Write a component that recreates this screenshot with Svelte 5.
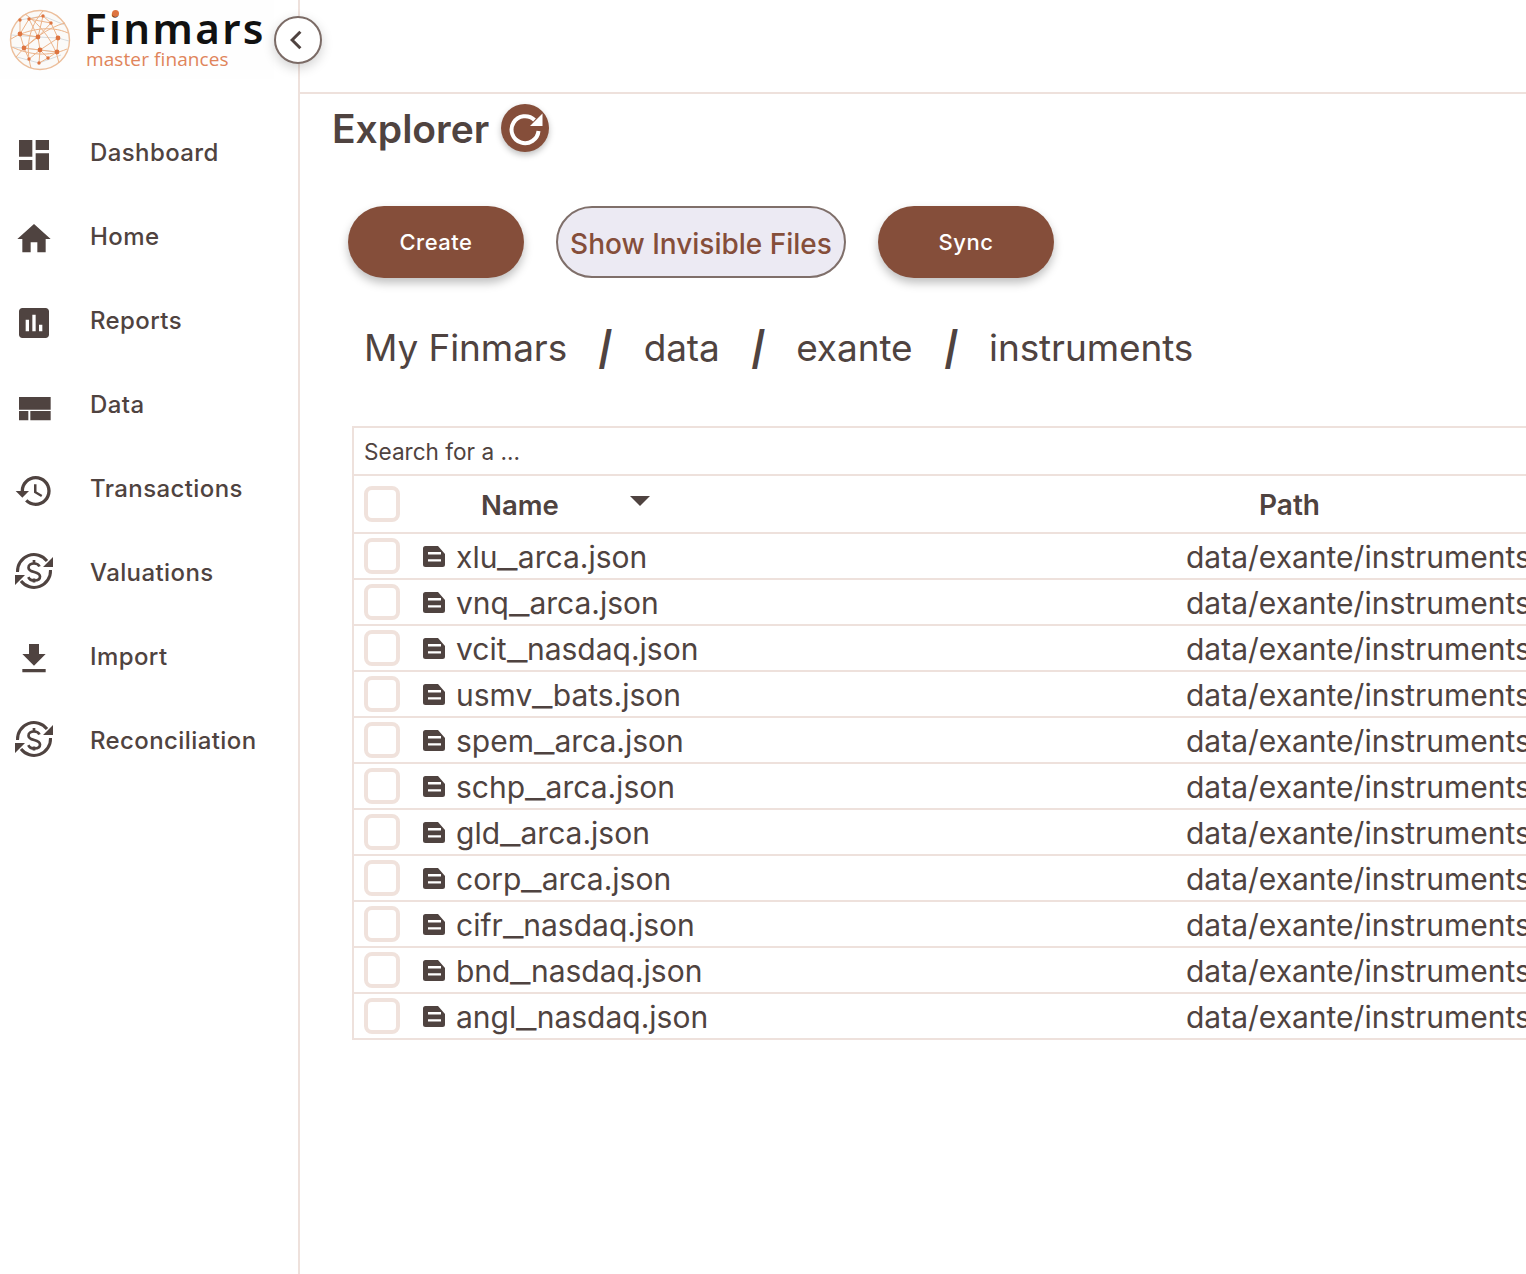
<script>
	const navItems = [
		{ label: 'Dashboard', icon: 'dashboard' },
		{ label: 'Home', icon: 'home' },
		{ label: 'Reports', icon: 'reports' },
		{ label: 'Data', icon: 'data' },
		{ label: 'Transactions', icon: 'history' },
		{ label: 'Valuations', icon: 'exchange' },
		{ label: 'Import', icon: 'import' },
		{ label: 'Reconciliation', icon: 'exchange' }
	];

	const iconPaths = {
		dashboard: 'M3 13h8V3H3v10zm0 8h8v-6H3v6zm10 0h8V11h-8v10zm0-18v6h8V3h-8z',
		home: 'M10 20v-6h4v6h5v-8h3L12 3 2 12h3v8z',
		reports: 'M19 3H5c-1.1 0-2 .9-2 2v14c0 1.1.9 2 2 2h14c1.1 0 2-.9 2-2V5c0-1.1-.9-2-2-2zM9 17H7v-7h2v7zm4 0h-2V7h2v10zm4 0h-2v-4h2v4z',
		data: 'M3 6h19v7.7H3zM3 14.4h5.6V20H3zM9.8 14.4H22V20H9.8z',
		history: 'M13 3c-4.97 0-9 4.03-9 9H1l3.89 3.89.07.14L9 12H6c0-3.87 3.13-7 7-7s7 3.13 7 7-3.13 7-7 7c-1.93 0-3.68-.79-4.94-2.06l-1.42 1.42C8.27 19.99 10.51 21 13 21c4.97 0 9-4.03 9-9s-4.03-9-9-9zm-1 5v5l4.28 2.54.72-1.21-3.5-2.08V8H12z',
		import: 'M19 9h-4V3H9v6H5l7 7 7-7zM5 18v2h14v-2H5z'
	};

	const files = [
		'xlu_arca.json',
		'vnq_arca.json',
		'vcit_nasdaq.json',
		'usmv_bats.json',
		'spem_arca.json',
		'schp_arca.json',
		'gld_arca.json',
		'corp_arca.json',
		'cifr_nasdaq.json',
		'bnd_nasdaq.json',
		'angl_nasdaq.json'
	];

	const crumbs = ['My Finmars', 'data', 'exante', 'instruments'];

	// dots of the logo globe, big ones first
	const bigNodes = [[33, 32], [15, 29], [19, 43], [35, 45], [53, 33], [52, 47]];
	const smallNodes = [[24, 14], [38, 11], [46, 18], [24, 54], [43, 53], [34, 58], [15, 15]];
</script>

<div class="page">
	<aside class="sidebar">
		<div class="logo">
			<svg class="globe" viewBox="0 0 70 70" width="70" height="70" aria-hidden="true">
				<circle cx="35" cy="35" r="29.5" fill="#fbfaf8" stroke="#ecbf9c" stroke-width="1.4" />
				<g fill="none" stroke="#cfd3d6" stroke-width="0.8">
					<path d="M6 30L33 32L53 33L64 36M8 42L35 45L52 47M15 15L38 11L60 20M12 52L34 58L56 50" />
				</g>
				<g fill="none" stroke="#ecb48a" stroke-width="1">
					<path d="M24 14L33 32L35 45L34 58M38 11L33 32L19 43L24 54M46 18L33 32L15 29L15 15" />
					<path d="M46 18L53 33L52 47L43 53L34 58M24 14L15 29L19 43M38 11L46 18M24 14L38 11" />
					<path d="M35 45L52 47M35 45L19 43M35 45L53 33M35 45L24 54M35 45L43 53M24 14L46 18" />
					<path d="M38 6C24 22 20 42 26 63M20 9C36 20 50 38 54 58M60 18C44 22 24 36 11 52M6 34C22 24 46 20 63 28M7 42C24 50 44 52 62 44" />
				</g>
				{#each bigNodes as [x, y]}
					<circle cx={x} cy={y} r="2.4" fill="#dd7440" />
				{/each}
				{#each smallNodes as [x, y]}
					<circle cx={x} cy={y} r="1.7" fill="#dd7440" />
				{/each}
			</svg>
			<div class="logo-text">
				<div class="logo-name">Finmars<span class="logo-dot"></span></div>
				<div class="logo-sub">master finances</div>
			</div>
		</div>

		<nav class="nav">
			{#each navItems as item}
				<div class="nav-item">
					{#if item.icon === 'exchange'}
						<svg class="nav-icon exchange" viewBox="0 0 40 40" width="40" height="40" aria-hidden="true">
							<g fill="none" stroke="#4f4340" stroke-width="3">
								<path d="M3.5 21A16.5 16.5 0 0 1 33 10" />
								<path d="M36.5 19A16.5 16.5 0 0 1 7 30" />
								<path d="M25.5 15.5c-.8-2-2.7-3-5.5-3-3.2 0-5.5 1.6-5.5 4.2 0 5.8 11.5 2.8 11.5 8.8 0 2.6-2.5 4-5.7 4-3 0-5-1.2-6-3.4" stroke-width="2.7" />
								<path d="M20 9v4M20 27.5v4" stroke-width="2.7" />
							</g>
							<path d="M39 6v10H29zM1 34V24h10z" fill="#4f4340" />
						</svg>
					{:else}
						<svg class="nav-icon" viewBox="0 0 24 24" width="40" height="40" aria-hidden="true">
							<path d={iconPaths[item.icon]} fill="#4f4340" />
						</svg>
					{/if}
					<span class="nav-label">{item.label}</span>
				</div>
			{/each}
		</nav>
	</aside>

	<button class="collapse" aria-label="Collapse sidebar">
		<svg viewBox="0 0 24 24" width="26" height="26" aria-hidden="true">
			<path d="M14.2 4.4L6.6 12l7.6 7.6" fill="none" stroke="#4f4340" stroke-width="2.8" />
		</svg>
	</button>

	<main class="main">
		<div class="topbar"></div>

		<div class="title-row">
			<h1>Explorer</h1>
			<button class="refresh" aria-label="Refresh">
				<svg viewBox="0 0 48 48" width="48" height="48" aria-hidden="true">
					<path d="M33.5 16A13.5 13.5 0 1 0 37.5 27" fill="none" stroke="#fff" stroke-width="4" />
					<path d="M41.5 9.5V22H29z" fill="#fff" />
				</svg>
			</button>
		</div>

		<div class="actions">
			<button class="btn primary">Create</button>
			<button class="btn outline">Show Invisible Files</button>
			<button class="btn primary">Sync</button>
		</div>

		<div class="crumbs">
			{#each crumbs as crumb, i}
				{#if i > 0}
					<span class="sep">/</span>
				{/if}
				<span class="crumb">{crumb}</span>
			{/each}
		</div>

		<section class="table">
			<div class="search">Search for a ...</div>
			<div class="row head">
				<span class="check"></span>
				<div class="name-cell">
					<span class="name-head">Name</span>
					<span class="sort"></span>
				</div>
				<span class="path-head">Path</span>
			</div>
			{#each files as file}
				{@const [stem, rest] = file.split('_')}
				<div class="row">
					<span class="check"></span>
					<div class="name-cell">
						<svg class="file-icon" viewBox="0 0 22 21" width="22" height="21" aria-hidden="true">
							<path fill-rule="evenodd" d="M2.5 0H15l7 8v10.5a2.5 2.5 0 0 1-2.5 2.5h-17A2.5 2.5 0 0 1 0 18.5v-16A2.5 2.5 0 0 1 2.5 0zM5 6v2.4h13V6zM5 13.2v2.4h13v-2.4z" fill="#4f4340" />
						</svg>
						<span class="file-name">{stem}<span class="underscore">_</span>{rest}</span>
					</div>
					<span class="file-path">data/exante/instruments</span>
				</div>
			{/each}
		</section>
	</main>
</div>

<style>
	:global(body) {
		margin: 0;
		overflow: hidden;
		background: #fff;
	}

	.page {
		display: grid;
		grid-template-columns: 300px 1fr;
		height: 100vh;
		font-family: Inter, "Liberation Sans", sans-serif;
		color: #4f4340;
		position: relative;
		overflow: hidden;
	}

	.sidebar {
		border-right: 2px solid #eee1dc;
		display: flex;
		flex-direction: column;
	}

	.logo {
		height: 74px;
		padding: 5px 0 0 5px;
		display: flex;
		gap: 9px;
		background: #fefefe;
		margin-right: 24px;
		margin-bottom: 34px;
	}

	.globe {
		flex: none;
	}

	.logo-name {
		position: relative;
		font-family: "Noto Sans", sans-serif;
		font-size: 42px;
		line-height: 46px;
		font-weight: 600;
		letter-spacing: 2.4px;
		color: #111;
	}

	.logo-dot {
		position: absolute;
		left: 28px;
		top: 5px;
		width: 7px;
		height: 7px;
		border-radius: 50%;
		background: #dd7440;
	}

	.logo-sub {
		font-family: "Open Sans", sans-serif;
		font-size: 19px;
		line-height: 20px;
		margin: -2px 0 0 2px;
		letter-spacing: 0.1px;
		color: #e0845a;
	}

	.nav-item {
		height: 84px;
		display: flex;
		align-items: center;
		padding-left: 14px;
	}

	.nav-icon.exchange {
		margin-bottom: 8px;
	}

	.nav-label {
		margin-left: 36px;
		margin-bottom: 5px;
		font-size: 24px;
		font-weight: 500;
		letter-spacing: 0.4px;
	}

	.collapse {
		position: absolute;
		left: 274px;
		top: 16px;
		width: 48px;
		height: 48px;
		padding: 0;
		display: flex;
		align-items: center;
		justify-content: center;
		background: #fff;
		border: 2px solid #7b6b66;
		border-radius: 50%;
		box-shadow: 0 4px 12px rgba(0, 0, 0, 0.18);
	}

	.main {
		min-width: 0;
		display: flex;
		flex-direction: column;
	}

	.topbar {
		height: 92px;
		flex: none;
		border-bottom: 2px solid #eee1dc;
	}

	.title-row {
		display: flex;
		align-items: center;
		gap: 12px;
		padding: 10px 0 0 32px;
		height: 48px;
	}

	h1 {
		margin: 2px 0 0;
		font-size: 39px;
		line-height: 48px;
		font-weight: 600;
	}

	.refresh {
		width: 48px;
		height: 48px;
		padding: 0;
		border: none;
		border-radius: 50%;
		background: #854e3a;
		box-shadow: 0 3px 6px rgba(0, 0, 0, 0.25);
	}

	.refresh svg {
		display: block;
	}

	.actions {
		display: flex;
		gap: 32px;
		padding: 54px 0 0 48px;
	}

	.btn {
		height: 72px;
		border-radius: 36px;
		font-family: inherit;
		font-weight: 500;
		padding: 0;
	}

	.primary {
		width: 176px;
		border: none;
		background: #854e3a;
		color: #fff;
		font-size: 22px;
		letter-spacing: 0.5px;
		box-shadow: 0 5px 10px rgba(0, 0, 0, 0.25);
	}

	.outline {
		width: 290px;
		border: 2px solid #7f6f6a;
		background: #eceaf3;
		color: #854e3a;
		font-size: 28px;
		padding-top: 4px;
	}

	.crumbs {
		display: flex;
		align-items: center;
		height: 46px;
		margin: 46px 0 0 64px;
		font-size: 37px;
		letter-spacing: -0.1px;
		white-space: nowrap;
	}

	.sep {
		width: 76.5px;
		text-align: center;
		font-weight: 800;
		font-size: 46px;
		transform: scaleX(0.72);
	}

	.table {
		margin: 56px 0 0 52px;
		width: 1400px;
		border: 2px solid #eee1dc;
		border-right: none;
		flex: none;
	}

	.search {
		height: 46px;
		display: flex;
		align-items: center;
		padding-left: 10px;
		font-size: 22.6px;
		border-bottom: 2px solid #eee1dc;
	}

	.row {
		height: 44px;
		display: flex;
		align-items: center;
		padding-left: 10px;
		border-bottom: 2px solid #eee1dc;
	}

	.row:last-child {
		border-bottom: none;
	}

	.head {
		height: 56px;
	}

	.check {
		width: 36px;
		height: 36px;
		box-sizing: border-box;
		border: 4px solid #f0e2dc;
		border-radius: 8px;
		flex: none;
	}

	.name-cell {
		width: 786px;
		flex: none;
		display: flex;
		align-items: center;
	}

	.name-head {
		margin: 2px 0 0 81px;
		font-size: 27.5px;
		font-weight: 600;
	}

	.sort {
		margin: -6px 0 0 71px;
		border-left: 10px solid transparent;
		border-right: 10px solid transparent;
		border-top: 10px solid #4f4340;
	}

	.path-head {
		margin: 2px 0 0 73px;
		font-size: 28px;
		font-weight: 600;
	}

	.file-icon {
		margin-left: 23px;
		flex: none;
	}

	.file-name {
		margin: 2px 0 0 11px;
		font-size: 30px;
	}

	.underscore {
		display: inline-block;
		padding: 0 3.4px;
		transform: scaleX(1.5);
	}

	.file-path {
		margin-top: 2px;
		font-size: 30px;
		white-space: nowrap;
	}
</style>
